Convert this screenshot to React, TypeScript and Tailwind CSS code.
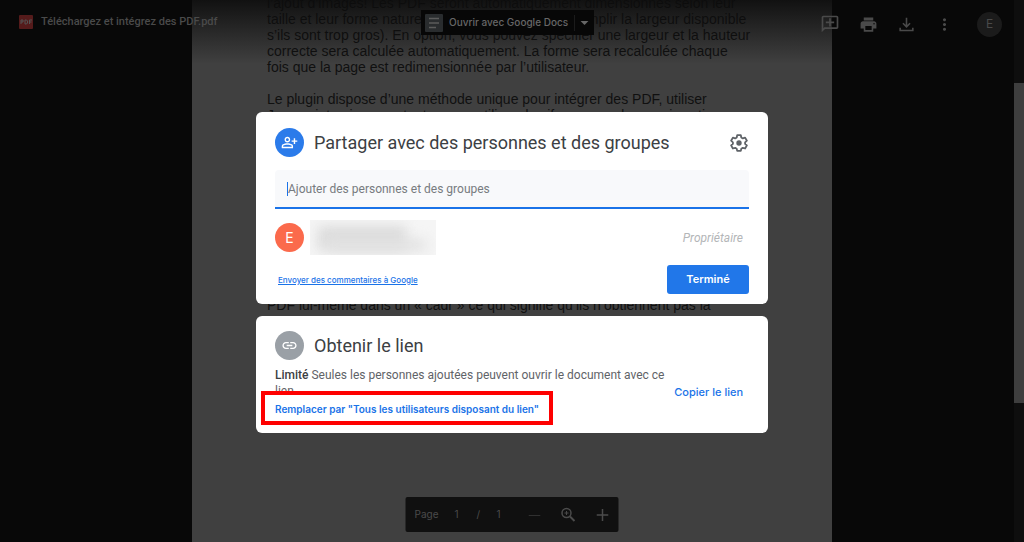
import {
  MdArrowDropDown,
  MdLink,
  MdMoreVert,
  MdOutlineAddComment,
  MdOutlinePersonAddAlt,
  MdPrint,
} from "react-icons/md";

const intro = [
  "l’ajout d’images! Les PDF seront automatiquement dimensionnés selon leur",
  "taille et leur forme naturelle (ou bien ajustés pour remplir la largeur disponible",
  "s’ils sont trop gros). En option, vous pouvez spécifier une largeur et la hauteur",
  "correcte sera calculée automatiquement. La forme sera recalculée chaque",
  "fois que la page est redimensionnée par l’utilisateur.",
];

const plugin = [
  "Le plugin dispose d’une méthode unique pour intégrer des PDF, utiliser",
  "Javascript uniquement, et ne pas utiliser des iframes ou des services tiers.",
];

const DocumentPage = () => (
  <main className="relative mx-auto flex h-full w-5/8 flex-col whitespace-nowrap bg-[#404040] px-[75px] font-['Liberation_Sans',sans-serif] text-sm leading-4 text-[#101010]">
    <div className="-mt-[5px]">
      {intro.map((line) => (
        <p key={line}>{line}</p>
      ))}
    </div>
    <div className="mt-4">
      {plugin.map((line) => (
        <p key={line}>{line}</p>
      ))}
    </div>
    <p className="mt-[174px]">PDF lui-même dans un « cadr » ce qui signifie qu’ils n’obtiennent pas la</p>
    <div className="absolute inset-x-0 top-0 h-16 bg-linear-to-b from-[#0c0c0c]/90 to-transparent"></div>
  </main>
);

const Header = () => (
  <header className="absolute inset-x-0 top-0 flex h-12 items-center justify-between pl-[19px] pr-[22px] text-[#4a4a4a]">
    <div className="flex items-center gap-2 pb-1">
      <svg viewBox="0 0 14 14" className="size-3.5">
        <rect width="14" height="14" rx="1" fill="#551b1b" />
        <path d="M2 9V5h2v2H2M6 5v4h1.500l1-1V6l-1-1H6M10.500 9V5H13M10.500 7h2" fill="none" stroke="#555" strokeWidth="1" />
      </svg>
      <h1 className="font-[Roboto,sans-serif] text-[11px] font-medium leading-4">Téléchargez et intégrez des PDF.pdf</h1>
    </div>
    {/* Open with */}
    <div className="absolute left-[421px] top-2.5 flex h-[25px] items-center bg-[#070707] text-[#676767]">
      <button className="flex h-full items-center gap-1.5 pl-1 text-[10px] font-medium">
        <svg viewBox="0 0 18 18" className="size-[18px]">
          <rect width="18" height="18" rx="1" fill="#292c2e" />
          <path d="M4 4.500h10M4 9h10M4 13.500h7" stroke="#5b5b5b" strokeWidth="1.500" />
        </svg>
        Ouvrir avec Google Docs
      </button>
      <button aria-label="Autres applications" className="ml-1.5 flex h-4 items-center border-l border-[#1b1b1b]">
        <MdArrowDropDown className="size-[19px]" />
      </button>
    </div>
    <div className="flex items-center gap-[19px]">
      <button aria-label="Ajouter un commentaire">
        <MdOutlineAddComment className="size-5 -scale-x-100" />
      </button>
      <button aria-label="Imprimer">
        <MdPrint className="size-[19px]" />
      </button>
      <button aria-label="Télécharger">
        <svg viewBox="0 0 24 24" className="size-[19px]" fill="none" stroke="currentColor" strokeWidth="2">
          <path d="M12 3.500v11M7.500 10.500l4.500 4.500 4.500-4.500M4 16v3.500h16V16" />
        </svg>
      </button>
      <button aria-label="Autres actions">
        <MdMoreVert className="size-[19px]" />
      </button>
      <button className="ml-1 size-[25px] rounded-full bg-[#1b1b1b] text-xs">E</button>
    </div>
  </header>
);

const ShareCard = () => (
  <section className="rounded-md bg-white px-[19px] pb-2.5 pt-4">
    <div className="flex items-center">
      <div className="flex size-[29px] items-center justify-center rounded-full bg-[#2b7bea]">
        <MdOutlinePersonAddAlt className="size-[17px] text-white" />
      </div>
      <h2 className="ml-2.5 font-[Roboto,sans-serif] text-lg leading-6 text-[#3c4043]">
        Partager avec des personnes et des groupes
      </h2>
      <button aria-label="Paramètres" className="ml-auto text-[#5f6368]">
        <svg viewBox="0 0 20 20" className="size-5" fill="none" stroke="currentColor" strokeWidth="1.800" strokeLinejoin="round">
          <path d="M8.200 2.200h3.600l.5 2.300 1.500.9 2.300-.8 1.800 3.100-1.800 1.600v1.600l1.800 1.500-1.800 3.100-2.300-.7-1.500.9-.5 2.200H8.200l-.5-2.200-1.500-.9-2.300.7-1.800-3.100 1.800-1.500V9.300L2.100 7.700l1.800-3.100 2.300.8 1.500-.9z" />
          <circle cx="10" cy="10" r="2.700" fill="currentColor" stroke="none" />
        </svg>
      </button>
    </div>
    <div className="relative mt-[13px]">
      <input
        aria-label="Ajouter des personnes et des groupes"
        placeholder="Ajouter des personnes et des groupes"
        className="block h-[39px] w-full rounded-t border-b-2 border-[#1a73e8] bg-[#f8f9fb] px-[13px] font-[Roboto,sans-serif] text-xs placeholder:text-[#777b7f]"
      />
      {/* Caret */}
      <div className="absolute left-3 top-3 h-3.5 w-px bg-[#1a73e8]"></div>
    </div>
    <div className="mt-[13px] flex h-[31px] items-center">
      <div className="flex size-[29px] items-center justify-center rounded-full bg-[#fb6a4c] text-sm text-white">E</div>
      <div className="relative ml-1.5 h-[35px] w-[126px] overflow-hidden bg-[#f5f5f5]">
        <div className="absolute left-2 top-1.5 h-6 w-[88px] bg-[#dcdcdc] blur-[6px]"></div>
        <div className="absolute bottom-1 left-4 h-3 w-[100px] bg-[#e2e2e2] blur-[6px]"></div>
      </div>
      <span className="ml-auto mr-1.5 font-[Roboto,sans-serif] text-xs italic text-[#b4b6b8]">Propriétaire</span>
    </div>
    <div className="mt-3 flex items-center justify-between">
      <a href="#" className="ml-[3px] text-[8px] font-medium text-[#1a73e8] underline">
        Envoyer des commentaires à Google
      </a>
      <button className="h-[29px] w-[82px] rounded-[3px] bg-[#2177e9] text-[11px] font-semibold text-white">Terminé</button>
    </div>
  </section>
);

const LinkCard = () => (
  <section className="rounded-md bg-white px-[19px] pb-4 pt-[15px]">
    <div className="flex items-center">
      <div className="flex size-[29px] items-center justify-center rounded-full bg-[#9aa0a6]">
        <MdLink className="size-[17px] text-white" />
      </div>
      <h2 className="ml-2.5 font-[Roboto,sans-serif] text-lg leading-6 text-[#3c4043]">Obtenir le lien</h2>
    </div>
    <div className="mt-[7px] flex items-center justify-between">
      <div className="w-[394px]">
        <p className="font-[Roboto,sans-serif] text-xs leading-4 text-[#5f6368]">
          <span className="font-medium text-[#3c4043]">Limité</span> Seules les personnes ajoutées peuvent ouvrir le document avec ce lien
        </p>
        <div className="relative mt-0.5 w-max">
          <button className="block text-[10px] font-semibold leading-4 text-[#1a73e8]">
            Remplacer par "Tous les utilisateurs disposant du lien"
          </button>
          <div className="pointer-events-none absolute -inset-x-3.5 -bottom-2 -top-2.5 border-4 border-[#fe0000]"></div>
        </div>
      </div>
      <button className="mr-1.5 text-[11px] font-medium text-[#1a73e8]">Copier le lien</button>
    </div>
  </section>
);

const PageToolbar = () => (
  <div className="absolute bottom-2.5 left-1/2 flex h-[35px] w-[213px] -translate-x-1/2 items-center rounded-xs bg-[#101010] text-[10px] text-[#4b4b4b]">
    <span className="ml-[9px] w-10">Page</span>
    <span className="w-[22px]">1</span>
    <span className="w-5">/</span>
    <span className="w-[22px]">1</span>
    <div className="flex flex-1 items-center justify-around">
      <button aria-label="Zoom arrière">
        <svg viewBox="0 0 12 12" className="size-3" stroke="#303030"><path d="M0 6.500h12" /></svg>
      </button>
      <button aria-label="Adapter">
        <svg viewBox="0 0 15 15" className="size-[15px]" fill="none" stroke="currentColor" strokeWidth="1.500">
          <circle cx="6" cy="6" r="4.500" />
          <path d="M9.500 9.500l4.500 4.500" strokeWidth="2" />
          <path d="M6 4v4M4 6h4" strokeWidth="1" />
        </svg>
      </button>
      <button aria-label="Zoom avant">
        <svg viewBox="0 0 12 12" className="size-3" stroke="currentColor" strokeWidth="1.500"><path d="M0 6h12M6 0v12" /></svg>
      </button>
    </div>
  </div>
);

export default function App() {
  return (
    <div className="relative h-screen overflow-hidden bg-[#080808] font-[Inter,sans-serif]">
      <DocumentPage />
      <Header />
      {/* Scrollbar */}
      <div className="absolute inset-y-0 right-0 w-2.5 bg-[#0e0e0e] pt-[83px]">
        <div className="h-80 bg-[#3e3e3e]"></div>
      </div>
      <PageToolbar />
      {/* Dialog */}
      <div role="dialog" aria-label="Partager" className="absolute left-1/2 top-28 flex w-1/2 -translate-x-1/2 flex-col gap-3">
        <ShareCard />
        <LinkCard />
      </div>
    </div>
  );
}
